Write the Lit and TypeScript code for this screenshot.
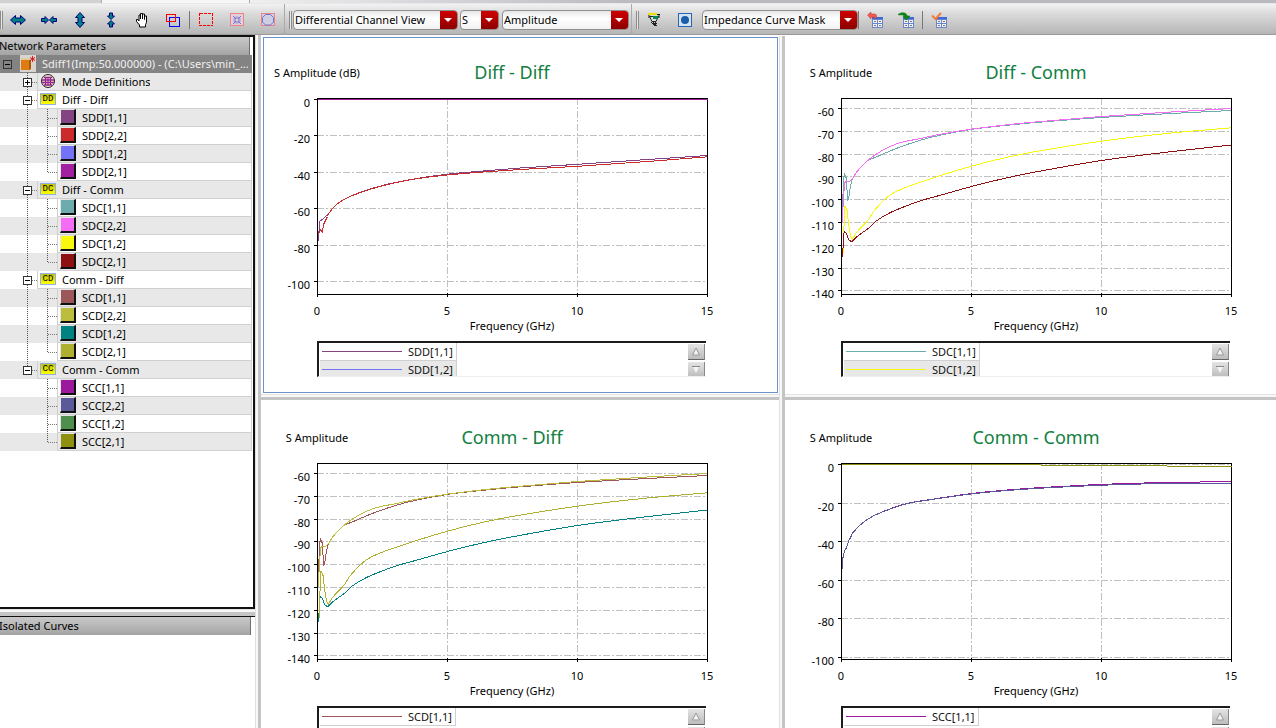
import { LitElement, html, svg, css, nothing } from "lit";
import { customElement, property } from "lit/decorators.js";
import { classMap } from "lit/directives/class-map.js";
import { styleMap } from "lit/directives/style-map.js";

type Curve = { color: string; points: string };
type Entry = { name: string; color: string };
type ChartSpec = {
  title: string;
  axis: string;
  ticks: { label: number; y: number }[];
  curves: Curve[];
  legend: Entry[];
  active?: boolean;
};

const ticks = (first: number, step: number, count: number, y0: number, dy: number) =>
  Array.from({ length: count }, (_, i) => ({ label: first - step * i, y: Math.round(y0 + dy * i) }));

/* Straight segments through the low-frequency ripple, a smooth spline after it. */
const curvePath = (points: string) => {
  const p = points.split(" ").map((s) => s.split(",").map(Number));
  let d = `M${p[0][0]} ${p[0][1]}`;
  for (let i = 1; i < p.length; i++) {
    const [x1, y1] = p[i - 1];
    const [x2, y2] = p[i];
    if (x1 < 15 || p.length < 10) {
      d += `L${x2} ${y2}`;
      continue;
    }
    const prev = p[i - 2] ?? p[i - 1];
    const next = p[i + 1] ?? p[i];
    const h = (x2 - x1) / 3;
    const m1 = (y2 - prev[1]) / (x2 - prev[0]);
    const m2 = (next[1] - y1) / (next[0] - x1);
    d += `C${x1 + h} ${y1 + m1 * h} ${x2 - h} ${y2 - m2 * h} ${x2} ${y2}`;
  }
  return d;
};

const UPPER_B =
  "1,123.7 1.5,108.7 3,84.7 5,82.7 8,83.3 11,80 15,73.7 25,63 39,53 57,44.7 79,40 96,36.3 130,30.6 156,27.4 189,23.9 260,18 330,13.5 390,10";
const UPPER_A =
  "1,112 2,80 3,76 5,80 6,102 7,101 9,87 11,80 15,73.7 25,63 37,57.5 56,49.5 77,42.3 96,37.3 130,30.9 156,27.8 189,24.5 260,19 330,15 390,12";
const MIDDLE =
  "1.5,155 2.5,128 3.5,107.5 5.5,112 7,125 9,138 11,140.5 15,134 27,121 32,113 46,98.5 59,91 79,83.7 99,77 130,67.7 156,61 189,54 260,42.7 325,35 390,29.3";
const LOWER =
  "1,158.7 2,140 2.7,132.7 5,135 7,141 10,143.3 16,137.7 27,129.7 34,123 49,114 66,107 79,102.3 99,96.7 130,88 156,81.5 189,74.4 260,62 325,53.7 390,46.5";

const crossTicks = ticks(-60, 10, 9, 10, 22.8);

const CHARTS: ChartSpec[] = [
  {
    title: "Diff - Diff",
    axis: "S Amplitude (dB)",
    active: true,
    ticks: ticks(0, 20, 6, 1, 36.4),
    curves: [
      { color: "#7373f7", points: "0,1 390,1" },
      { color: "#a21fa2", points: "0,1 390,1" },
      {
        color: "#844484",
        points:
          "1,143 2,123 6,120 11,115.5 16,108.7 26,101.3 43,93.7 70,85.7 101,79.7 130,75.7 163,72.7 203,69.5 260,65.8 330,61 390,57",
      },
      {
        color: "#cc2b2b",
        points:
          "1,135.7 3,131 5,134 6,126 10,118 11,115.5 16,108.7 26,101.3 43,94 70,86 101,80 130,76.5 163,73.7 203,71 260,67.8 330,63 390,58.3",
      },
    ],
    legend: [
      { name: "SDD[1,1]", color: "#844484" },
      { name: "SDD[1,2]", color: "#7373f7" },
    ],
  },
  {
    title: "Diff - Comm",
    axis: "S Amplitude",
    ticks: crossTicks,
    curves: [
      { color: "#6dacac", points: UPPER_A },
      { color: "#f46df4", points: UPPER_B },
      { color: "#f8f80f", points: MIDDLE },
      { color: "#8f1010", points: LOWER },
    ],
    legend: [
      { name: "SDC[1,1]", color: "#6dacac" },
      { name: "SDC[1,2]", color: "#f8f80f" },
    ],
  },
  {
    title: "Comm - Diff",
    axis: "S Amplitude",
    ticks: crossTicks,
    curves: [
      { color: "#9c5858", points: UPPER_A },
      { color: "#bdbd3d", points: UPPER_B },
      { color: "#008282", points: LOWER },
      { color: "#b0b030", points: MIDDLE },
    ],
    legend: [{ name: "SCD[1,1]", color: "#9c5858" }],
  },
  {
    title: "Comm - Comm",
    axis: "S Amplitude",
    ticks: ticks(0, 20, 6, 1, 38.6),
    curves: [
      {
        color: "#9c189c",
        points:
          "1,106 1.5,94 3,87.7 5,84 7,77.7 9,74 11,69.7 17,63 29,54 46,46.3 66,39.9 92,35.6 130,30 166,26.5 199,24.1 232,22.3 261,20.8 309,19.3 350,18.7 390,17.8",
      },
      {
        color: "#5a5a9a",
        points:
          "1,106 1.5,94 3,87.7 5,84 7,77.7 9,74 11,69.7 17,63 29,54 46,46.5 66,40 92,35.8 130,30.4 166,27 199,24.7 232,23 261,21.7 309,20.3 350,20 390,20",
      },
      { color: "#8f8f10", points: "0,1 199,1 200,2 325,2 326,3 390,3" },
    ],
    legend: [{ name: "SCC[1,1]", color: "#9c189c" }],
  },
];

const GROUPS = [
  {
    code: "DD",
    name: "Diff - Diff",
    items: [
      { name: "SDD[1,1]", color: "#844484" },
      { name: "SDD[2,2]", color: "#cc2b2b" },
      { name: "SDD[1,2]", color: "#7373f7" },
      { name: "SDD[2,1]", color: "#a21fa2" },
    ],
  },
  {
    code: "DC",
    name: "Diff - Comm",
    items: [
      { name: "SDC[1,1]", color: "#6dacac" },
      { name: "SDC[2,2]", color: "#f46df4" },
      { name: "SDC[1,2]", color: "#f8f80f" },
      { name: "SDC[2,1]", color: "#8f1010" },
    ],
  },
  {
    code: "CD",
    name: "Comm - Diff",
    items: [
      { name: "SCD[1,1]", color: "#9c5858" },
      { name: "SCD[2,2]", color: "#bdbd3d" },
      { name: "SCD[1,2]", color: "#008282" },
      { name: "SCD[2,1]", color: "#b0b030" },
    ],
  },
  {
    code: "CC",
    name: "Comm - Comm",
    items: [
      { name: "SCC[1,1]", color: "#9c189c" },
      { name: "SCC[2,2]", color: "#5a5a9a" },
      { name: "SCC[1,2]", color: "#4e8f4e" },
      { name: "SCC[2,1]", color: "#8f8f10" },
    ],
  },
];

/* One S-parameter plot with its legend strip. */
@customElement("s-chart")
export class SChart extends LitElement {
  @property({ attribute: false }) spec!: ChartSpec;

  static styles = css`
    :host {
      display: block;
      min-width: 0;
      height: 358px;
      box-sizing: border-box;
      padding: 1px 1px 1px 2px;
      background: #fff;
      overflow: hidden;
    }
    .frame {
      height: 356px;
      box-sizing: border-box;
      border: 1px solid transparent;
    }
    .frame.active {
      border-color: #6b93c9;
    }
    .plot {
      display: block;
      width: 100%;
      max-width: 460px;
      height: auto;
      font: 11px "Noto Sans", sans-serif;
    }
    .heading {
      font-size: 18px;
      fill: #128040;
    }
    .box,
    .tick {
      fill: none;
      stroke: #000;
      shape-rendering: crispEdges;
    }
    .grid {
      stroke: #c0c0c0;
      stroke-dasharray: 7 2 2 2;
      shape-rendering: crispEdges;
    }
    .curve {
      fill: none;
      shape-rendering: crispEdges;
    }
    .legend {
      display: flex;
      justify-content: space-between;
      max-width: 389px;
      height: 36px;
      box-sizing: border-box;
      margin: 3px 0 0 53px;
      border-top: 2px solid #1c1c1c;
      border-left: 2px solid #1c1c1c;
      border-bottom: 1px solid #eee;
      overflow: hidden;
    }
    .entries {
      list-style: none;
      margin: 0;
      padding: 0 0 0 1px;
    }
    .entry {
      display: flex;
      align-items: center;
      gap: 6px;
      height: 18px;
      box-sizing: border-box;
      padding: 1px 3px 0 2px;
      border-right: 1px solid #d0d0d0;
      border-bottom: 1px solid #d0d0d0;
      font: 11px/18px "Noto Sans", sans-serif;
      color: #111;
    }
    .entry:nth-child(even) {
      background: #e8e8e8;
    }
    .line {
      display: block;
      width: 80px;
      height: 2px;
    }
    .scroll {
      display: flex;
      flex-direction: column;
      gap: 2px;
      padding: 1px 1px 0 0;
    }
    .step {
      display: grid;
      place-items: center;
      flex: none;
      width: 17px;
      height: 16px;
      padding: 0;
      border: 0;
      border-right: 1px solid #888;
      border-bottom: 1px solid #666;
      background: linear-gradient(#e4e4e4, #bcbcbc);
    }
  `;

  render() {
    const s = this.spec;
    const X = 53;
    const Y = 60;
    return html`
      <section class=${classMap({ frame: true, active: !!s.active })}>
        <svg class="plot" viewBox="0 0 460 300" role="img" aria-label=${s.title}>
          <text x="53" y="39" text-anchor="middle">${s.axis}</text>
          <text class="heading" x="248" y="41" text-anchor="middle">${s.title}</text>
          ${s.ticks.map(
            (t) => svg`
              <line class="grid" x1=${X} x2=${X + 390} y1=${Y + t.y + 0.5} y2=${Y + t.y + 0.5}></line>
              <line class="tick" x1=${X - 3} x2=${X} y1=${Y + t.y + 0.5} y2=${Y + t.y + 0.5}></line>
              <text x="46" y=${Y + t.y + 8} text-anchor="end">${t.label}</text>`
          )}
          ${[0, 5, 10, 15].map((g) => {
            const x = X + g * 26 + 0.5;
            return svg`
              ${g % 15 ? svg`<line class="grid" x1=${x} x2=${x} y1=${Y} y2=${Y + 196}></line>` : nothing}
              <line class="tick" x1=${x} x2=${x} y1=${Y + 195} y2=${Y + 199}></line>
              <text x=${X + g * 26} y=${Y + 217} text-anchor="middle">${g}</text>`;
          })}
          <rect class="box" x=${X + 0.5} y=${Y + 0.5} width="390" height="196"></rect>
          ${s.curves.map(
            (c) => svg`<path class="curve" transform="translate(53.5 60.5)" stroke=${c.color} d=${curvePath(c.points)}></path>`
          )}
          <text x="248" y="292" text-anchor="middle">Frequency (GHz)</text>
        </svg>
        <div class="legend">
          <ul class="entries">
            ${s.legend.map(
              (e) => html`<li class="entry">
                <svg class="line" viewBox="0 0 80 2" shape-rendering="crispEdges"><path d="M0 .5H80" stroke=${e.color}></path></svg>${e.name}
              </li>`
            )}
          </ul>
          <div class="scroll">
            <button class="step" aria-label="Scroll up">
              <svg width="10" height="9" viewBox="0 0 10 9"><path d="M5 1 8.500 8H1.500Z" fill="#f4f4f4" stroke="#999"></path></svg>
            </button>
            <button class="step" aria-label="Scroll down">
              <svg width="10" height="9" viewBox="0 0 10 9"><path d="M5 8 8.500 1H1.500Z" fill="#f4f4f4"></path><path d="M1 1.500H9" stroke="#888"></path></svg>
            </button>
          </div>
        </div>
      </section>
    `;
  }
}

const arrowH = svg`<path d="M0.5 8 5.5 3.5V6H10.5V3.5L15.5 8 10.5 12.5V10H5.5V12.5Z" fill="#008080" stroke="#000080"></path>`;
const miniWindow = svg`
  <rect x="5" y="5" width="11" height="11" fill="#6a86c8"></rect>
  <rect x="5" y="5" width="11" height="2" fill="#3f68d8"></rect>
  <path d="M6 8h4v3H6zM11 8h4v3h-4zM6 12h4v3H6zM11 12h4v3h-4z" fill="#eef1f8"></path>
  <path d="M7 9.5h2M12 9.5h2M7 13.5h2M12 13.5h2" stroke="#777"></path>`;

const ICONS: Record<string, unknown> = {
  "Expand horizontally": arrowH,
  "Compress horizontally": svg`<path d="M7.5 8 4 4.5V6.5H.5V9.5H4V11.5ZM8.5 8 12 4.5V6.5H15.5V9.5H12V11.5Z" fill="#008080" stroke="#000080"></path>`,
  "Expand vertically": svg`<g transform="rotate(90 8 8)">${arrowH}</g>`,
  "Compress vertically": svg`<path d="M8 7.5 4.500 4H6.500V1H9.500V4H11.500ZM8 8.500 4.500 12H6.500V15H9.500V12H11.500Z" fill="#008080" stroke="#000080"></path>`,
  Pan: svg`<path d="M5.5 15V13L2.5 9.500V7.500H4L5 9V3H6.500V7V1.500H8.500V7V2H10.500V7.500V4H12.500V10.500L11.500 12.500V15Z" fill="#fff" stroke="#000"></path>`,
  Overlap: svg`<g fill="none" shape-rendering="crispEdges"><rect x="4.500" y="5.500" width="10" height="9" stroke="#00f"></rect><rect x="1.500" y="2.500" width="9" height="7" stroke="#f00"></rect></g>`,
  "Select region": svg`<rect x="1.5" y="1.5" width="13" height="12" fill="none" stroke="#f00" stroke-dasharray="3 1" shape-rendering="crispEdges"></rect>`,
  "Fit region": svg`<rect x="1.5" y="1.5" width="13" height="12" fill="#e3d0dc" stroke="#ea8585"></rect><path d="M4 4 7 7M7 4.500V7H4.500M12 4 9 7M9 4.500V7H11.500M4 12 7 9M4.500 9H7V11.500M12 12 9 9M9 11.500V9H11.500" stroke="#7474cf" fill="none"></path>`,
  "Circle region": svg`<rect x="1.500" y="1.500" width="13" height="12" fill="#d2cde0" stroke="#ea8585"></rect><path d="M5.500 2.500H10.500L13.500 5.500V10L10.500 13H5.500L2.500 10V5.500Z" fill="#cfcfe4" stroke="#7474cf"></path>`,
  "Derived curve": svg`<path d="M2 2.500H14M3 2.500V6M13 2.500V6" stroke="#111"></path><rect x="2" y="1" width="9" height="2" fill="#e8e000"></rect><path d="M3.500 4.500H12.500L10 9.500H6Z" fill="#ddd" stroke="#222"></path><rect x="7" y="4" width="5" height="3" fill="#085"></rect><path d="M5 10h1v1h1v-1h1v1h1v-1h1v1h1v1h-1v1h-1v1H8v-1H7v-1H6v-1H5z" fill="#222"></path><path d="M9 13.500h2" stroke="#222"></path>`,
  "Show markers": svg`<rect x="1.500" y="1.500" width="13" height="13" fill="#d4e2f2" stroke="#2468b0"></rect><circle cx="8" cy="8" r="4" fill="#1c5da8"></circle>`,
  "Import mask": svg`${miniWindow}<path d="M.5 3 4 0V2H7.500Q9.500 2 9.500 4V6H7V5H4V7Z" fill="#f05a50" stroke="#c9302a" stroke-width=".5"></path>`,
  "Export mask": svg`${miniWindow}<path d="M.5 2Q7-1.500 9.500 4H12L8.500 8 5 4.500H7Q5 2 .5 3Z" fill="#0a8a10" stroke="#066a0a" stroke-width=".5"></path>`,
  "Check mask": svg`${miniWindow}<path d="M1 3.500 4.500 7 10 1" fill="none" stroke="#f57a3a" stroke-width="2"></path>`,
};

@customElement("app-root")
export class AppRoot extends LitElement {
  static styles = css`
    :host {
      display: flex;
      flex-direction: column;
      height: 100vh;
      overflow: hidden;
      background: #fff;
      color: #000;
      font: 11px/18px "Noto Sans", sans-serif;
    }
    .tabs {
      display: flex;
      flex: none;
      height: 4px;
      box-sizing: border-box;
      background: linear-gradient(90deg, #f2f2f2 18%, #b8bac0 50%, #b8bac0);
      border-bottom: 1px solid #e8e8ea;
    }
    .tab {
      width: 101px;
      background: #d2d2d2;
      border-right: 1px solid #aaa;
    }
    .tab.current {
      width: 147px;
      background: #f6f6f6;
    }
    .toolbars {
      display: flex;
      flex: none;
      height: 31px;
      background: #a8a8a8;
    }
    .bar {
      display: flex;
      align-items: center;
      box-sizing: border-box;
      padding-top: 2px;
      background: linear-gradient(#f2f2f2, #dcdcdc 30%, #b6b6b6);
      border-bottom: 1px solid #999;
      border-right: 1px solid #aaa;
      border-radius: 0 0 3px 3px;
    }
    .bar.rest {
      flex: 1;
      border-right: 0;
    }
    .grip {
      width: 3px;
      height: 18px;
      flex: none;
      background: repeating-linear-gradient(90deg, #8c8c8c 0 1px, #e8e8e8 1px 2px);
    }
    .grip.inset {
      margin-left: 4px;
    }
    .tool {
      display: flex;
      align-items: center;
      width: 31px;
      height: 26px;
      flex: none;
      padding: 0 0 0 7px;
      border: 0;
      background: none;
    }
    .sep {
      width: 1px;
      height: 18px;
      margin: 0 1px 0 0;
      flex: none;
      background: #777;
    }
    .combo {
      display: flex;
      position: relative;
      height: 20px;
      flex: none;
      box-sizing: border-box;
      border: 1px solid #909090;
      border-radius: 4px;
      background: linear-gradient(#e6e6e6, #fff 40%, #f2f2f2);
      overflow: hidden;
    }
    .combo.view {
      width: 165px;
      margin: 0 2px 0 1px;
    }
    .combo.kind {
      width: 39px;
      margin-right: 3px;
    }
    .combo.format {
      width: 127px;
      margin-right: 2px;
    }
    .combo.mask {
      width: 156px;
      margin-left: 1px;
    }
    .combo::after {
      content: "";
      width: 17px;
      flex: none;
      background: linear-gradient(#d00000, #8c0000);
    }
    .combo::before {
      content: "";
      position: absolute;
      right: 5px;
      top: 7px;
      border: 4px solid transparent;
      border-top-color: #fff;
      border-bottom: 0;
      z-index: 1;
      pointer-events: none;
    }
    .combo select {
      appearance: none;
      flex: 1;
      min-width: 0;
      padding: 0 0 0 1px;
      border: 0;
      background: none;
      color: #000;
      font: 11px/18px "Noto Sans", sans-serif;
    }
    .main {
      display: flex;
      flex: 1;
      min-height: 0;
    }
    .dock {
      display: flex;
      flex-direction: column;
      width: 255px;
      flex: none;
    }
    .panel {
      box-sizing: border-box;
      border-top: 2px solid #111;
      overflow: hidden;
    }
    .panel.params {
      flex: 1;
      border-right: 2px solid #111;
      border-bottom: 2px solid #111;
    }
    .panel.isolated {
      height: 112px;
      border-top-width: 1px;
    }
    .caption {
      display: block;
      margin: 0 4px 0 0;
      padding: 0;
      text-indent: -1px;
      font: 11px/18px "Noto Sans", sans-serif;
      background: linear-gradient(#c9c9c9, #a4a4a4);
      border-right: 1px solid #707070;
    }
    .panel.params .caption {
      margin-right: 3px;
    }
    .row-split {
      height: 6px;
      flex: none;
      background: linear-gradient(#e4e4e4 0 1px, #f8f8f8 1px 3px, #c4c4c4 3px);
    }
    .dock .row-split {
      height: 7px;
    }
    .col-split {
      width: 6px;
      flex: none;
      background: linear-gradient(90deg, #e0e0e0 0 1px, #f8f8f8 1px 3px, #c4c4c4 3px);
    }
    .tree {
      list-style: none;
      margin: 0 1px 0 0;
      padding: 0;
    }
    .row {
      display: flex;
      height: 18px;
      background: #fff;
    }
    .row.alt {
      background: #e8e8e8;
    }
    .row.selected {
      background: #838383;
      color: #f0f0f0;
    }
    .guide {
      width: 20px;
      flex: none;
    }
    .guide.root {
      display: flex;
      align-items: center;
      justify-content: center;
      width: 15px;
      padding-right: 5px;
    }
    .branch {
      display: flex;
      align-items: center;
      width: 17px;
      flex: none;
      padding-left: 3px;
      box-sizing: border-box;
      background:
        repeating-linear-gradient(#555 0 1px, transparent 1px 2px) 7px 0 / 1px 100% no-repeat,
        repeating-linear-gradient(90deg, #777 0 1px, transparent 1px 2px) 8px 9px / 9px 1px no-repeat;
    }
    .branch.last {
      background-size: 1px 9px, 9px 1px;
    }
    .rail {
      width: 20px;
      flex: none;
      background: repeating-linear-gradient(#555 0 1px, transparent 1px 2px) 7px 0 / 1px 100% no-repeat;
    }
    .rail.none {
      background: none;
    }
    .cell {
      display: flex;
      flex: 1;
      min-width: 0;
      box-sizing: border-box;
      padding-left: 2px;
      gap: 6px;
      border-left: 1px solid #d0d0d0;
      border-bottom: 1px solid #d0d0d0;
      border-right: 1px solid #d0d0d0;
      white-space: nowrap;
    }
    .selected .cell {
      border-color: #838383;
      padding-left: 0;
      border-left: 0;
    }
    .label {
      overflow: hidden;
      text-overflow: ellipsis;
      line-height: 18px;
    }
    .toggle {
      display: block;
      padding: 0;
      width: 9px;
      height: 9px;
      border: 0;
      background: none;
    }
    .toggle svg,
    .glyph {
      display: block;
      flex: none;
    }
    .swatch {
      width: 16px;
      height: 16px;
      flex: none;
      box-sizing: border-box;
      border: 1px solid #e4e4e4;
      border-right: 2px solid #111;
      border-bottom: 2px solid #111;
    }
    .code {
      width: 16px;
      height: 12px;
      margin-top: 2px;
      flex: none;
      box-sizing: border-box;
      border: 1px solid #8fb0e8;
      background: linear-gradient(#c4c400, #ff0);
      font: 9px/11px "Liberation Mono", monospace;
      text-align: center;
      color: #000;
    }
    .charts {
      display: grid;
      flex: 1;
      min-width: 0;
      grid-template-columns: minmax(0, 518fr) 6px minmax(0, 491fr);
      align-content: start;
      padding-top: 1px;
    }
    .charts .row-split {
      margin-bottom: 1px;
    }
  `;

  private tool(name: string) {
    return html`<button class="tool" aria-label=${name}>
      <svg width="16" height="16" viewBox="0 0 16 16">${ICONS[name]}</svg>
    </button>`;
  }

  private combo(kind: string, label: string, value: string) {
    return html`<span class="combo ${kind}"
      ><select aria-label=${label}>
        <option>${value}</option>
      </select></span
    >`;
  }

  private toggle(open: boolean, name: string, color = "#fff") {
    return html`<button class="toggle" aria-label="Toggle ${name}">
      <svg width="9" height="9" shape-rendering="crispEdges">
        <rect x=".5" y=".5" width="8" height="8" fill=${color} stroke="#333"></rect>
        <path d=${open ? "M2 4.5H7" : "M2 4.5H7M4.5 2V7"} stroke="#000"></path>
      </svg>
    </button>`;
  }

  private tree() {
    let n = 0;
    const row = (body: unknown) => html`<li role="treeitem" class=${classMap({ row: true, alt: n++ % 2 === 0 })}>${body}</li>`;
    return html`<ul class="tree" role="tree" aria-label="Network Parameters">
      <li class="row selected" role="treeitem">
        <span class="guide root">${this.toggle(true, "Sdiff1", "#838383")}</span>
        <span class="cell">
          <svg class="glyph" width="16" height="17" viewBox="0 0 16 17">
            <rect width="16" height="17" fill="#d8d4d0"></rect>
            <path d="M1 5H11L10 15H1Z" fill="#e07b10"></path>
            <path d="M9 5H11V14L9 15Z" fill="#a85a08"></path>
            <path d="M2 5V3M4 5V3M6 5V3M8 5V3" stroke="#e8c060"></path>
            <path d="M12.500 1V7M10 2.500 15 5.500M15 2.500 10 5.500" stroke="#e01818"></path>
          </svg>
          <span class="label">Sdiff1(Imp:50.000000) - (C:\\Users\\min_...</span>
        </span>
      </li>
      ${row(html`<span class="guide"></span><span class="branch">${this.toggle(false, "Mode Definitions")}</span>
        <span class="cell">
          <svg class="glyph" width="16" height="16" viewBox="0 0 16 16">
            <circle cx="8" cy="8" r="6.5" fill="#f4e0c8" stroke="#222"></circle>
            <path d="M4 4.500H12M2 7H14M2 9.500H14M4 12H12" stroke="#902090" stroke-width="1.500"></path>
            <path d="M5.500 4V12M8 4V12M10.500 4V12" stroke="#902090"></path>
          </svg>
          <span class="label">Mode Definitions</span>
        </span>`)}
      ${GROUPS.map((g, gi) => {
        const lastGroup = gi === GROUPS.length - 1;
        return html`${row(html`<span class="guide"></span
            ><span class=${classMap({ branch: true, last: lastGroup })}>${this.toggle(true, g.name)}</span>
            <span class="cell"><span class="code">${g.code}</span><span class="label">${g.name}</span></span>`)}
          ${g.items.map((it, i) =>
            row(html`<span class="guide"></span><span class=${classMap({ rail: true, none: lastGroup })}></span
              ><span class=${classMap({ branch: true, last: i === g.items.length - 1 })}></span>
              <span class="cell"
                ><span class="swatch" style=${styleMap({ background: it.color })}></span><span class="label">${it.name}</span></span
              >`)
          )}`;
      })}
    </ul>`;
  }

  render() {
    return html`
      <div class="tabs"><span class="tab"></span><span class="tab current"></span></div>
      <header class="toolbars">
        <div class="bar" role="toolbar">
          <span class="grip"></span>
          ${Object.keys(ICONS).slice(0, 6).map((k) => this.tool(k))}
          <span class="sep"></span>
          ${Object.keys(ICONS).slice(6, 9).map((k) => this.tool(k))}
        </div>
        <div class="bar" role="toolbar">
          <span class="grip inset"></span>
          ${this.combo("view", "View", "Differential Channel View")}
          ${this.combo("kind", "Parameter", "S")}
          ${this.combo("format", "Format", "Amplitude")}
        </div>
        <div class="bar rest" role="toolbar">
          <span class="grip inset"></span>
          ${this.tool("Derived curve")} ${this.tool("Show markers")}
          ${this.combo("mask", "Mask", "Impedance Curve Mask")}
          <span class="sep"></span>
          ${this.tool("Import mask")} ${this.tool("Export mask")}
          <span class="sep"></span>
          ${this.tool("Check mask")}
        </div>
      </header>
      <div class="main">
        <aside class="dock">
          <section class="panel params">
            <h2 class="caption">Network Parameters</h2>
            ${this.tree()}
          </section>
          <div class="row-split"></div>
          <section class="panel isolated">
            <h2 class="caption">Isolated Curves</h2>
          </section>
        </aside>
        <div class="col-split"></div>
        <main class="charts">
          ${[0, 2].map(
            (r) => html`
              <s-chart .spec=${CHARTS[r]}></s-chart>
              <div class="col-split"></div>
              <s-chart .spec=${CHARTS[r + 1]}></s-chart>
              ${r === 0
                ? html`<div class="row-split"></div>
                    <div class="col-split"></div>
                    <div class="row-split"></div>`
                : nothing}
            `
          )}
        </main>
      </div>
    `;
  }
}
